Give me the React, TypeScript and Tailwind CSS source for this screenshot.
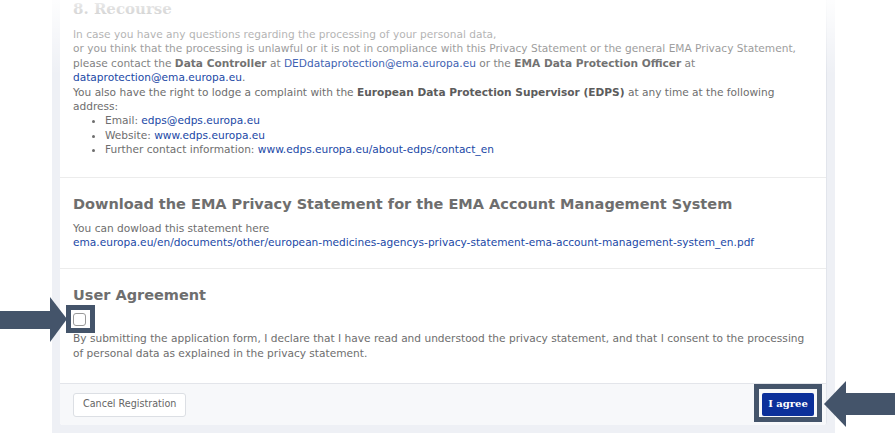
import React from 'react'

const linkCls = 'text-[#2148a6]'

function Arrow({ dir }: { dir: 'right' | 'left' }) {
  // annotation arrows drawn over the page
  if (dir === 'right') {
    return (
      <svg className="absolute left-0 top-[296px]" width="68" height="48" viewBox="0 0 68 48">
        <rect x="0" y="15" width="51" height="18" fill="#44546a" />
        <polygon points="50,1 67,23 50,46" fill="#44546a" />
      </svg>
    )
  }
  return (
    <svg className="absolute right-0 top-[380px]" width="71" height="48" viewBox="0 0 71 48">
      <rect x="21" y="13" width="50" height="22" fill="#44546a" />
      <polygon points="22,1 0,24 22,47" fill="#44546a" />
    </svg>
  )
}

export default function App() {
  const [agreed, setAgreed] = React.useState(false)

  return (
    <div className="relative w-[895px] h-[433px] overflow-hidden bg-white font-['DejaVu_Sans',sans-serif] text-[10.6px] leading-[14.4px] text-[#6e6e6e]">
      <div className="ml-[52px] w-[783px] h-full bg-[#eef0f5] px-[8px] pb-[8px] flex flex-col">
        <div className="flex-1 flex flex-col bg-white border-r border-[#e2e5ec] rounded-b-[3px] overflow-hidden">
          {/* 8. Recourse */}
          <section className="px-[13px] pb-[20px] border-b border-[#ececec]">
            <h3 className="-mt-[1px] font-['DejaVu_Serif',serif] font-bold text-[15px] leading-[20px] text-[#666]">
              8. Recourse
            </h3>
            <div className="mt-[8px]">
              <p>
                In case you have any questions regarding the processing of your personal data,
                <br />
                or you think that the processing is unlawful or it is not in compliance with this Privacy Statement or the general EMA Privacy Statement,
                <br />
                please contact the <b className="text-[#5c5c5c]">Data Controller</b> at{' '}
                <a className={linkCls}>DEDdataprotection@ema.europa.eu</a> or the{' '}
                <b className="text-[#5c5c5c]">EMA Data Protection Officer</b> at
                <br />
                <a className={linkCls}>dataprotection@ema.europa.eu</a>.
                <br />
                You also have the right to lodge a complaint with the{' '}
                <b className="text-[#5c5c5c]">European Data Protection Supervisor (EDPS)</b> at any time at the following
                <br />
                address:
              </p>
              <ul className="list-disc pl-[32px]">
                <li>
                  Email: <a className={linkCls}>edps@edps.europa.eu</a>
                </li>
                <li>
                  Website: <a className={linkCls}>www.edps.europa.eu</a>
                </li>
                <li>
                  Further contact information: <a className={linkCls}>www.edps.europa.eu/about-edps/contact_en</a>
                </li>
              </ul>
            </div>
          </section>

          {/* Download */}
          <section className="px-[13px] pt-[16px] pb-[19px] border-b border-[#ececec]">
            <h3 className="font-bold text-[14.5px] leading-[20px] text-[#6e6e6e]">
              Download the EMA Privacy Statement for the EMA Account Management System
            </h3>
            <p className="mt-[7px]">
              You can dowload this statement here
              <br />
              <a className={linkCls}>
                ema.europa.eu/en/documents/other/european-medicines-agencys-privacy-statement-ema-account-management-system_en.pdf
              </a>
            </p>
          </section>

          {/* User agreement */}
          <section className="flex-1 px-[13px] pt-[16px]">
            <h3 className="font-bold text-[14.5px] leading-[20px] text-[#6e6e6e]">User Agreement</h3>
            <div className="relative mt-[8px] w-[13px] h-[13px]">
              <div className="absolute -left-[7px] -top-[8px] w-[29px] h-[28px] border-[5px] border-[#44546a]" />
              <button
                type="button"
                onClick={() => setAgreed(!agreed)}
                className={`relative block w-[13px] h-[13px] rounded-[3px] border border-[#9a9a9a] ${agreed ? 'bg-[#0b2f9a]' : 'bg-white'}`}
              />
            </div>
            <p className="mt-[5px]">
              By submitting the application form, I declare that I have read and understood the privacy statement, and that I consent to the processing
              <br />
              of personal data as explained in the privacy statement.
            </p>
          </section>

          {/* footer */}
          <div className="h-[42px] shrink-0 flex items-center justify-between pl-[13px] pr-[12px] bg-[#f7f8fa] border-t border-[#e3e5ea]">
            <button
              type="button"
              className="h-[24px] px-[9px] bg-white border border-[#dcdfe4] rounded-[3px] text-[9.6px] text-[#666]"
            >
              Cancel Registration
            </button>
            <div className="relative">
              <div className="absolute -left-[8px] -right-[8px] -top-[9px] -bottom-[6px] border-[5px] border-[#44546a]" />
              <button
                type="button"
                className="relative h-[23px] w-[52px] bg-[#0b2f9a] rounded-[2px] font-['DejaVu_Serif',serif] font-bold text-[10px] text-white"
              >
                I agree
              </button>
            </div>
          </div>
        </div>
      </div>

      {/* top fade */}
      <div className="absolute left-0 right-0 top-0 h-[75px] pointer-events-none bg-gradient-to-b from-white/90 to-white/0" />

      <Arrow dir="right" />
      <Arrow dir="left" />
    </div>
  )
}
